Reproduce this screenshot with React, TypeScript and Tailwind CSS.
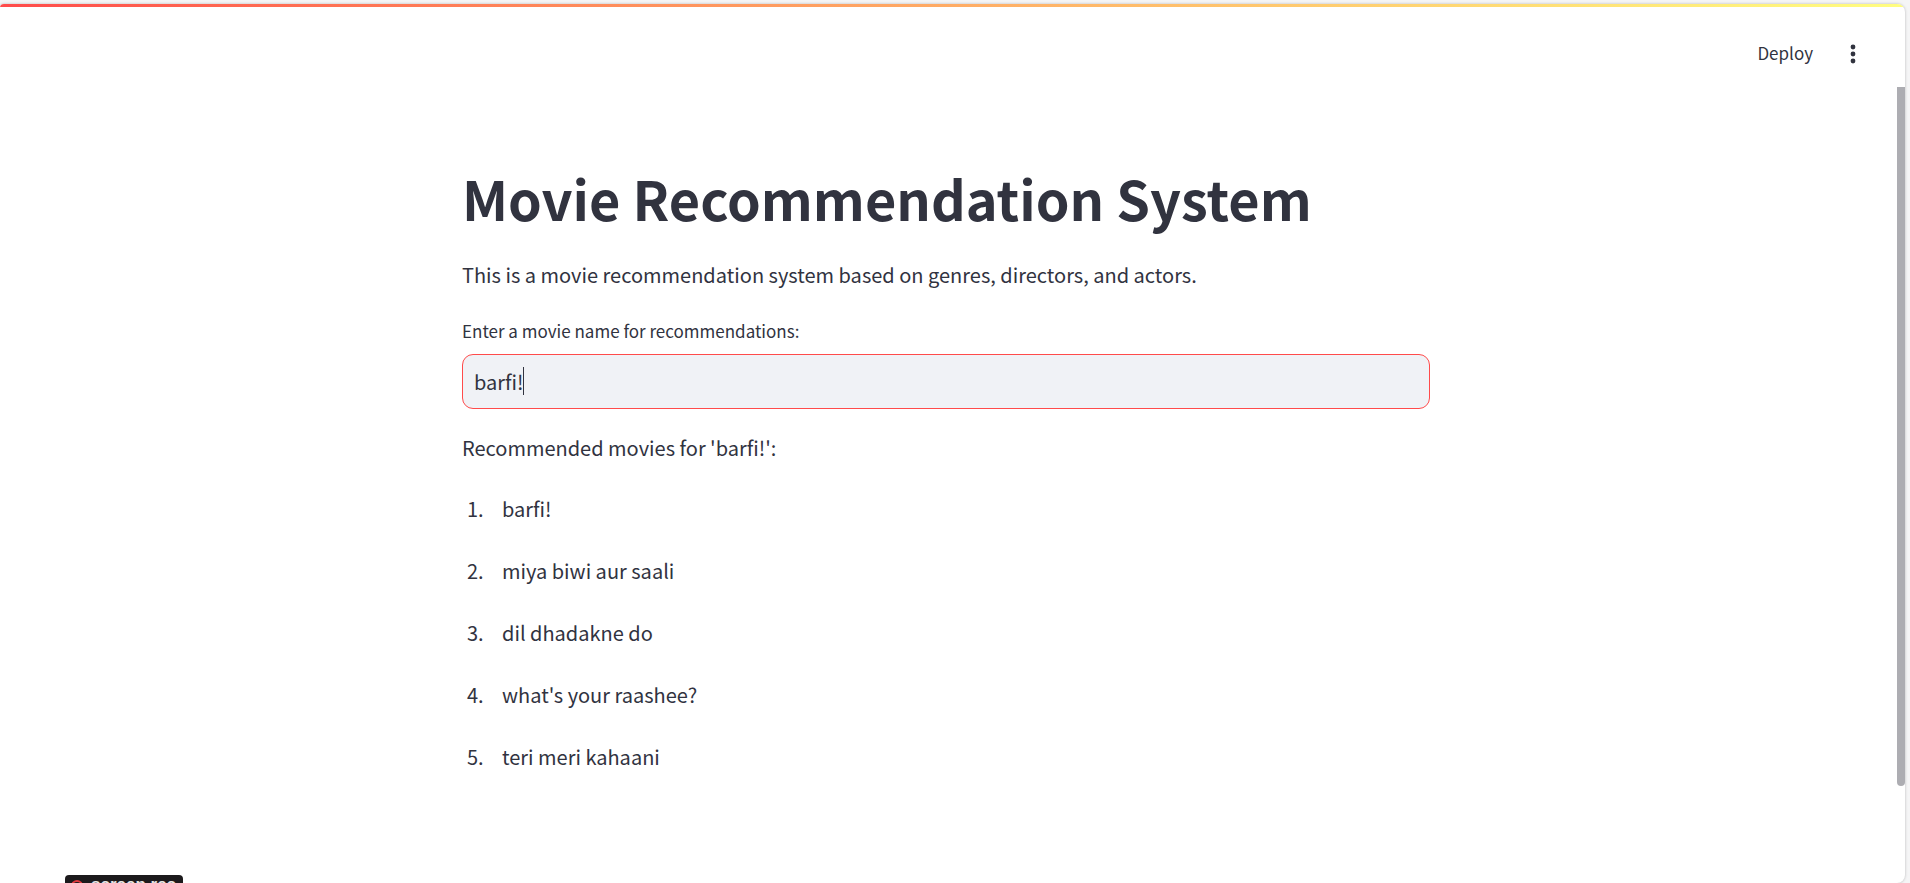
import { useState } from "react";

const movies = [
  "barfi!",
  "miya biwi aur saali",
  "dil dhadakne do",
  "what's your raashee?",
  "teri meri kahaani",
];

function Header() {
  return (
    <header className="flex h-20 items-center justify-end gap-[22px] pr-[42px] pt-5">
      <button type="button" className="px-2 pb-[2px] text-[17px] leading-6">
        Deploy
      </button>
      <button type="button" aria-label="Main menu" className="flex size-5 items-center justify-center">
        <svg width="6" height="20" viewBox="0 0 6 20" fill="currentColor">
          <circle cx="3" cy="3" r="2.4" />
          <circle cx="3" cy="10" r="2.4" />
          <circle cx="3" cy="17" r="2.4" />
        </svg>
      </button>
    </header>
  );
}

export default function App() {
  const [name, setName] = useState("barfi!");
  return (
    <div className="relative h-screen overflow-hidden bg-[#f5f5f6] pr-[5px] pt-1 font-['Noto_Sans_CJK_SC','Noto_Sans',sans-serif] text-[#31333f]">
      <div className="relative flex h-full flex-col rounded-r-lg rounded-tl-sm bg-white shadow-[0_0_3px_rgba(0,0,0,0.25)]">
        <div className="absolute inset-0 overflow-hidden rounded-r-lg rounded-tl-sm">
          <div className="h-[3px] bg-linear-to-r from-[#ff4b4b] to-[#fffd80]" />
        </div>
        <div className="relative flex min-h-0 flex-1 flex-col">
          <Header />
          <div className="flex min-h-0 flex-1 justify-between">
            <main className="flex min-w-0 flex-1 justify-center pr-[5px] pt-[78px]">
              <div className="w-full max-w-[968px]">
                <h1 className="text-[54px] font-bold leading-[72px]">Movie Recommendation System</h1>
                <p className="mt-[25px] text-[20px] leading-8">
                  This is a movie recommendation system based on genres, directors, and actors.
                </p>
                <label htmlFor="movie" className="mt-7 block text-[17px] leading-6">
                  Enter a movie name for recommendations:
                </label>
                <div className="relative mt-[11px]">
                  <input
                    id="movie"
                    type="text"
                    value={name}
                    onChange={(e) => setName(e.target.value)}
                    className="block h-[55px] w-full rounded-[11px] border border-[#ff4b4b] bg-[#f0f2f6] px-[11px] text-[20px] leading-8 caret-transparent outline-none"
                  />
                  <span aria-hidden="true" className="absolute left-[61px] top-[13px] h-7 w-px bg-[#31333f]" />
                </div>
                <p className="mt-[23px] text-[20px] leading-8">Recommended movies for '{name}':</p>
                <ol className="mt-[29px] flex flex-col gap-[30px] text-[20px] leading-8">
                  {movies.map((movie, i) => (
                    <li key={movie} className="flex">
                      <span className="w-10 pl-[5px]">{i + 1}.</span>
                      <span>{movie}</span>
                    </li>
                  ))}
                </ol>
              </div>
            </main>
            <div className="w-2 pt-[3px]">
              <div className="h-[699px] rounded-b-full bg-[#adadb2]" />
            </div>
          </div>
        </div>
      </div>
      <div className="absolute left-[65px] top-full -mt-2 flex h-7 w-[118px] items-start gap-2 rounded bg-[#1c1a1c] px-[6px] text-[#e4e4e4]">
        <svg className="mt-[5px]" width="12" height="12" viewBox="0 0 12 12" fill="none" stroke="#e0383e" strokeWidth="2">
          <circle cx="6" cy="6" r="5" />
        </svg>
        <span className="whitespace-nowrap font-['Liberation_Sans',sans-serif] text-[17px] font-bold leading-5">
          screen rec
        </span>
      </div>
    </div>
  );
}
